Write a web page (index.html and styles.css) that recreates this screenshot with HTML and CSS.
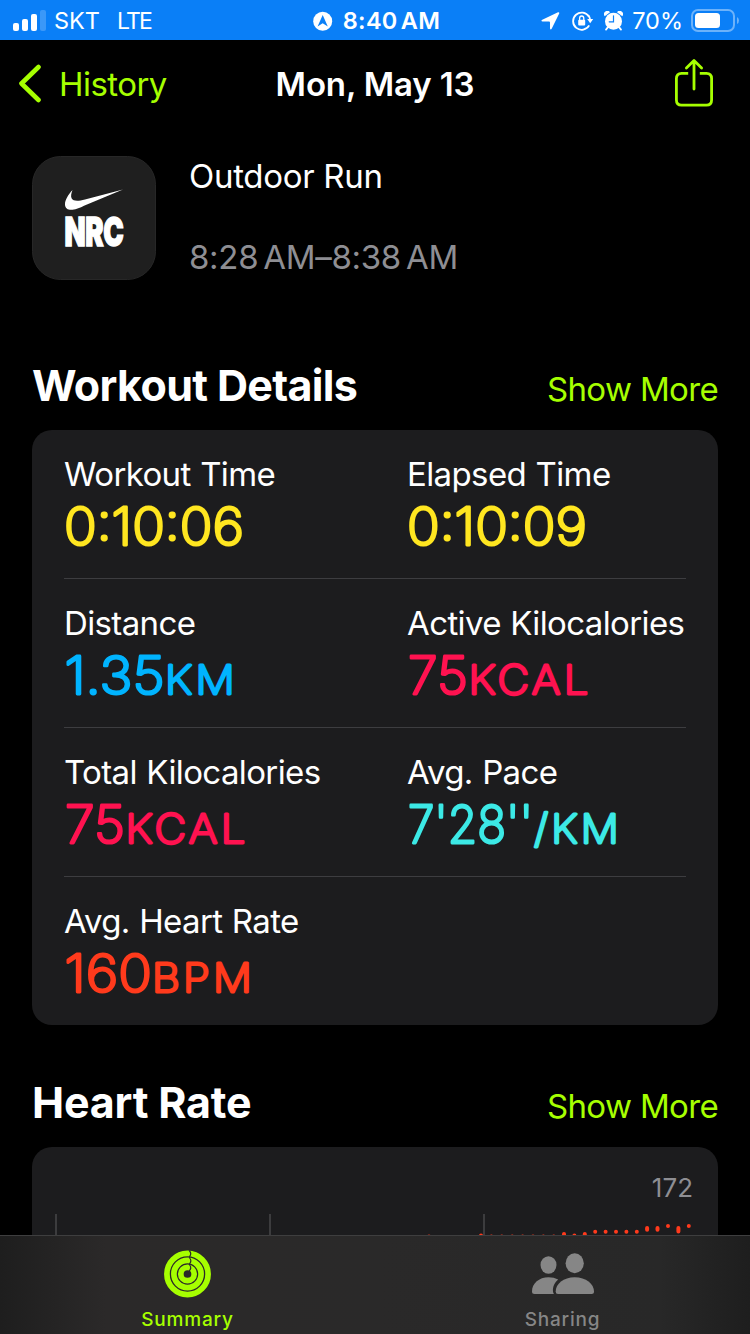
FILE: index.html
```html
<!DOCTYPE html>
<html lang="en">
<head>
    <meta charset="UTF-8">
    <meta name="viewport" content="width=device-width, initial-scale=1.0">
    <title>Mon, May 13</title>
    <link rel="stylesheet" href="styles.css">
</head>
<body>
    <div class="status-bar">
        <div class="status-left">
            <svg class="signal" width="34" height="22" viewBox="0 0 34 22">
                <rect x="0" y="13" width="6" height="8" rx="2"/>
                <rect x="9" y="9" width="6" height="12" rx="2"/>
                <rect x="18" y="4" width="6" height="17" rx="2"/>
                <rect x="27" y="0" width="6" height="21" rx="2" opacity="0.2"/>
            </svg>
            <span class="carrier">SKT</span>
            <span class="network">LTE</span>
        </div>
        <div class="status-center">
            <svg width="20" height="20" viewBox="0 0 20 20">
                <circle cx="9.7" cy="10.3" r="9.5"/>
                <path class="cutout" d="M9.7 4L14.8 15.4L9.7 12.2L4.6 15.4Z"/>
            </svg>
            <span class="clock">8:40 AM</span>
        </div>
        <div class="status-right">
            <svg class="arrow" width="19" height="19" viewBox="0 0 19 19">
                <path d="M17 0.3Q18.6 0 18.2 1.5L10.8 16.6Q9.6 18.6 9 16.6V10.4Q9 9.4 8 9.4H1.6Q-0.6 9 1.3 7.8Z"/>
            </svg>
            <svg class="lock" width="22" height="20" viewBox="0 0 22 20">
                <path d="M17 5.6A8.6 8.6 0 1 0 17.2 14.4" fill="none" stroke="#fff" stroke-width="1.8"/>
                <path d="M15.2 8H21.2L18.2 12.2Z"/>
                <path d="M16.2 4.4Q18.2 6.6 18.2 9" fill="none" stroke="#fff" stroke-width="1.8"/>
                <rect x="6.2" y="8.8" width="7" height="5.8" rx="1"/>
                <path d="M7.6 9V7.4A2.1 2.4 0 0 1 11.8 7.4V9" fill="none" stroke="#fff" stroke-width="1.3"/>
            </svg>
            <svg class="alarm" width="19" height="20" viewBox="0 0 19 20">
                <circle cx="9.5" cy="10.2" r="8.5"/>
                <path d="M0.7 5.2A3.2 3.2 0 0 1 6 1.2ZM18.3 5.2A3.2 3.2 0 0 0 13 1.2Z"/>
                <path d="M3.8 16.4L2 18.6M15.2 16.4L17 18.6" stroke="#fff" stroke-width="1.8" stroke-linecap="round"/>
                <path d="M9.5 4.8V10.8H5.2" fill="none" stroke="#0a7ff7" stroke-width="1.2" stroke-linecap="round"/>
            </svg>
            <span class="percent">70%</span>
            <svg class="battery" width="49" height="24" viewBox="0 0 49 24">
                <rect x="1" y="1" width="42" height="21" rx="6" fill="none" stroke="#fff" stroke-width="2" opacity="0.4"/>
                <rect x="4" y="4" width="25" height="15" rx="3.5"/>
                <path d="M46 8Q48 9 48 11.5Q48 14 46 15Z" opacity="0.4"/>
            </svg>
        </div>
    </div>

    <header class="nav">
        <div class="back">
            <svg width="24" height="40" viewBox="0 0 24 40">
                <path d="M20.5 3L3.5 19.5L20.5 36" fill="none" stroke="#a6ff00" stroke-width="4.6" stroke-linecap="round" stroke-linejoin="round"/>
            </svg>
            <span>History</span>
        </div>
        <h1>Mon, May 13</h1>
        <svg class="share" width="40" height="50" viewBox="0 0 40 50" fill="none" stroke="#a6ff00" stroke-width="2.8" stroke-linecap="round" stroke-linejoin="round">
            <path d="M14.2 15.4H7.6Q2.4 15.4 2.4 20.6V42Q2.4 47.2 7.6 47.2H32.4Q37.6 47.2 37.6 42V20.6Q37.6 15.4 32.4 15.4H25.8" stroke-linecap="butt"/>
            <path d="M20 31V3M12.4 10.1L20 2.6L27.6 10.1"/>
        </svg>
    </header>

    <main>
        <section class="summary">
            <svg class="app-icon" width="124" height="124" viewBox="0 0 124 124">
                <rect x="0.5" y="0.5" width="123" height="123" rx="28" fill="#1f1f1f" stroke="#272727"/>
                <path d="M40.5 34C36 39 33 44 33 48.2C33 52.6 36.2 54.2 40.5 53.8C44.5 53.4 48 51.6 52 49.7L91 33.6L53 43.6C46.5 45.2 41.5 45.6 39.7 42.6C38.6 40.4 39.2 37.5 40.5 34Z" fill="#fff"/>
                <text class="nrc" x="32.5" y="90.3" textLength="59" lengthAdjust="spacingAndGlyphs">NRC</text>
            </svg>
            <div class="summary-text">
                <p class="activity">Outdoor Run</p>
                <p class="time-range">8:28 AM–8:38 AM</p>
            </div>
        </section>

        <div class="section-head">
            <h2>Workout Details</h2>
            <a class="more">Show More</a>
        </div>
        <section class="card details">
            <div class="row">
                <div class="metric">
                    <p>Workout Time</p>
                    <svg class="value yellow" width="300" height="60"><text y="50.6"><tspan x="0" textLength="180" lengthAdjust="spacingAndGlyphs">0:10:06</tspan></text></svg>
                </div>
                <div class="metric">
                    <p>Elapsed Time</p>
                    <svg class="value yellow" width="300" height="60"><text y="50.6"><tspan x="0" textLength="180" lengthAdjust="spacingAndGlyphs">0:10:09</tspan></text></svg>
                </div>
            </div>
            <div class="row">
                <div class="metric">
                    <p>Distance</p>
                    <svg class="value blue" width="300" height="60"><text y="50.6"><tspan x="0.5" textLength="100" lengthAdjust="spacingAndGlyphs">1.35</tspan><tspan class="unit" x="101" textLength="73" lengthAdjust="spacingAndGlyphs">KM</tspan></text></svg>
                </div>
                <div class="metric">
                    <p>Active Kilocalories</p>
                    <svg class="value pink" width="300" height="60"><text y="50.6"><tspan x="1" textLength="60" lengthAdjust="spacingAndGlyphs">75</tspan><tspan class="unit" x="61.5" textLength="123" lengthAdjust="spacingAndGlyphs">KCAL</tspan></text></svg>
                </div>
            </div>
            <div class="row">
                <div class="metric">
                    <p>Total Kilocalories</p>
                    <svg class="value pink" width="300" height="60"><text y="50.6"><tspan x="1" textLength="60" lengthAdjust="spacingAndGlyphs">75</tspan><tspan class="unit" x="61.5" textLength="123" lengthAdjust="spacingAndGlyphs">KCAL</tspan></text></svg>
                </div>
                <div class="metric">
                    <p>Avg. Pace</p>
                    <svg class="value teal" width="300" height="60"><text y="50.6"><tspan x="1" textLength="125" lengthAdjust="spacingAndGlyphs">7'28''</tspan><tspan class="unit" x="127" textLength="88" lengthAdjust="spacingAndGlyphs">/KM</tspan></text></svg>
                </div>
            </div>
            <div class="row">
                <div class="metric">
                    <p>Avg. Heart Rate</p>
                    <svg class="value red" width="300" height="60"><text y="50.6"><tspan x="0.5" textLength="87.5" lengthAdjust="spacingAndGlyphs">160</tspan><tspan class="unit" x="88" textLength="103" lengthAdjust="spacingAndGlyphs">BPM</tspan></text></svg>
                </div>
            </div>
        </section>

        <div class="section-head">
            <h2>Heart Rate</h2>
            <a class="more">Show More</a>
        </div>
        <section class="card chart">
            <p class="chart-max">172</p>
            <svg class="plot" width="686" height="120" viewBox="0 0 686 120">
                <path d="M24 0V120M238 0V120M452 0V120" stroke="#3c3c3e" stroke-width="2"/>
                <g stroke="#ff3a1c" stroke-width="4" stroke-linecap="round">
                    <path d="M397 22.6v4M449 21.5v6M459.4 22.5v4M469.8 22.5v4M480.2 22.5v4M490.6 22.5v4M501 22.5v4M511.4 22.5v4M521.8 22.5v4"/>
                    <path d="M532 20v6M542.4 21.4v4M552.8 20v4M563.2 17.7v0M573.6 17.7v0M584 17.7v0M594.4 17.7v0M604.8 17.7v0"/>
                    <path d="M615.1 14v1.8M625.5 14v1.8M636 12v0M646.4 14v3.6M656.8 12v0"/>
                </g>
            </svg>
        </section>
    </main>

    <nav class="tab-bar">
        <div class="tab active">
            <svg width="50" height="50" viewBox="0 0 50 50" fill="none">
                <g stroke="#a6ff00" stroke-width="5.7">
                    <circle cx="24.5" cy="25" r="20.6"/>
                    <circle cx="24.5" cy="25" r="13.6"/>
                    <circle cx="24.5" cy="25" r="6.7"/>
                </g>
                <path d="M26.2 1.5Q29 4.4 26.7 7.4V9Q29 12 26.7 14.6V16Q29 19 26.2 22" stroke="#2a2a2a" stroke-width="1.2"/>
            </svg>
            <span>Summary</span>
        </div>
        <div class="tab">
            <svg width="64" height="50" viewBox="0 0 64 50" fill="#868686">
                <ellipse cx="17.5" cy="16" rx="8" ry="8.7"/>
                <path d="M3.5 45Q1 45 1 42.5C1 34.5 8 28.3 17.5 28.3Q23 28.3 27.2 30.5C23.5 33.5 21.5 38 22 42.5Q22.2 44 23 45Z"/>
                <ellipse cx="43.7" cy="14.2" rx="9.1" ry="10"/>
                <path d="M27 45Q24.7 45 24.7 42.5C24.7 35 32.5 28.3 43.7 28.3C55 28.3 63 35 63 42.5Q63 45 60.5 45Z"/>
            </svg>
            <span>Sharing</span>
        </div>
    </nav>
</body>
</html>
```
FILE: styles.css
```css
body {
    font-family: Inter, "Liberation Sans", sans-serif;
    margin: 0;
    padding: 0;
    width: 750px;
    height: 1334px;
    overflow: hidden;
    background-color: #000;
    color: #fff;
}
h1, h2, p {
    margin: 0;
}
svg {
    display: block;
    flex: none;
}
span, p, h1, h2, a {
    white-space: nowrap;
}

/* status bar */
.status-bar {
    display: grid;
    grid-template-columns: 1fr auto 1fr;
    align-items: center;
    box-sizing: border-box;
    height: 40px;
    padding: 0 10px 0 13px;
    background-color: #0a7ff7;
    font-size: 23.5px;
    line-height: 42px;
    fill: #fff;
}
.status-left, .status-center, .status-right {
    display: flex;
    align-items: center;
}
.status-right {
    justify-content: flex-end;
}
.signal {
    margin-right: 7px;
}
.network {
    margin-left: 17px;
    font-size: 23px;
    letter-spacing: -1.8px;
}
.status-center {
    gap: 10px;
}
.clock {
    font-weight: 600;
    letter-spacing: 0.3px;
    word-spacing: -3px;
}
.cutout {
    fill: #0a7ff7;
}
.lock {
    margin-left: 12px;
}
.alarm {
    margin: 0 9px 0 10px;
}
.battery {
    margin-left: 8px;
}

/* navigation */
.nav {
    display: grid;
    grid-template-columns: 1fr auto 1fr;
    align-items: center;
    height: 88px;
    padding: 0 18px;
    font-size: 33px;
    line-height: 40px;
}
.back {
    display: flex;
    align-items: center;
    gap: 17px;
    color: #a6ff00;
    letter-spacing: -0.55px;
}
.nav h1 {
    font-size: 33px;
    font-weight: 600;
    letter-spacing: -0.15px;
}
.share {
    justify-self: end;
    margin: 0 18px 2px 0;
}

/* workout summary */
.summary {
    display: flex;
    gap: 33px;
    padding: 28px 32px 0;
    height: 124px;
    font-size: 33px;
    line-height: 40px;
    letter-spacing: -0.3px;
}
.nrc {
    fill: #fff;
    stroke: #fff;
    stroke-width: 1.4px;
    font-size: 39.5px;
    font-weight: 900;
    letter-spacing: -0.5px;
}
.time-range {
    margin-top: 41px;
    color: #8e8e93;
    word-spacing: -4px;
}
.section-head {
    display: flex;
    justify-content: space-between;
    align-items: baseline;
    height: 122px;
    padding: 0 32px;
    box-sizing: border-box;
}
.summary + .section-head {
    height: 150px;
    padding-top: 28px;
}
.section-head h2 {
    font-size: 43px;
    font-weight: 700;
    letter-spacing: -0.65px;
    line-height: 52px;
    padding-top: 51px;
}
.details + .section-head h2 {
    letter-spacing: -0.2px;
}
.more {
    color: #a6ff00;
    font-size: 33px;
    letter-spacing: -0.65px;
}

/* cards */
.card {
    margin: 0 32px;
    background-color: #1c1c1e;
    border-radius: 20px;
}
.details {
    box-sizing: border-box;
    height: 595px;
    padding: 0 32px;
}
.row {
    display: grid;
    grid-template-columns: 343px 1fr;
    box-sizing: border-box;
    height: 149px;
    padding-top: 24px;
    border-bottom: 1px solid #3d3d40;
}
.row:last-child {
    border-bottom: none;
}
.metric {
    min-width: 0;
}
.metric p {
    font-size: 33px;
    line-height: 40px;
    letter-spacing: -0.62px;
    word-spacing: 0.8px;
}
/* thin glyphs with a round stroke give the digits soft ends */
.value {
    font-size: 52px;
    font-weight: 200;
    stroke-width: 2.8px;
    stroke-linejoin: round;
    overflow: visible;
}
.unit {
    font-size: 40px;
    letter-spacing: 3px;
}
.yellow { fill: #ffe620; stroke: #ffe620; }
.blue { fill: #00b4ff; stroke: #00b4ff; }
.pink { fill: #ff1250; stroke: #ff1250; }
.teal { fill: #3ce9e6; stroke: #3ce9e6; }
.red { fill: #ff3a1c; stroke: #ff3a1c; }

.chart {
    height: 187px;
    border-radius: 20px 20px 0 0;
}
.chart-max {
    height: 67px;
    padding: 25px 25px 0;
    box-sizing: border-box;
    color: #8e8e93;
    font-size: 26px;
    line-height: 32px;
    text-align: right;
}

.tab-bar {
    position: fixed;
    left: 0;
    right: 0;
    bottom: 0;
    display: grid;
    grid-template-columns: 1fr 1fr;
    box-sizing: border-box;
    height: 99px;
    border-top: 1px solid #3e3e3f;
    background: linear-gradient(to right, #1e1e1e, #2b2929 14%, #2a2929 50%, #282828 88%, #1e1e1e);
}
.tab {
    display: flex;
    flex-direction: column;
    align-items: center;
    padding-top: 13px;
    color: #868686;
    font-size: 19px;
    font-weight: 500;
    line-height: 24px;
    letter-spacing: 0.8px;
}
.tab span {
    margin-top: 9px;
}
.tab.active {
    color: #a6ff00;
}
```
